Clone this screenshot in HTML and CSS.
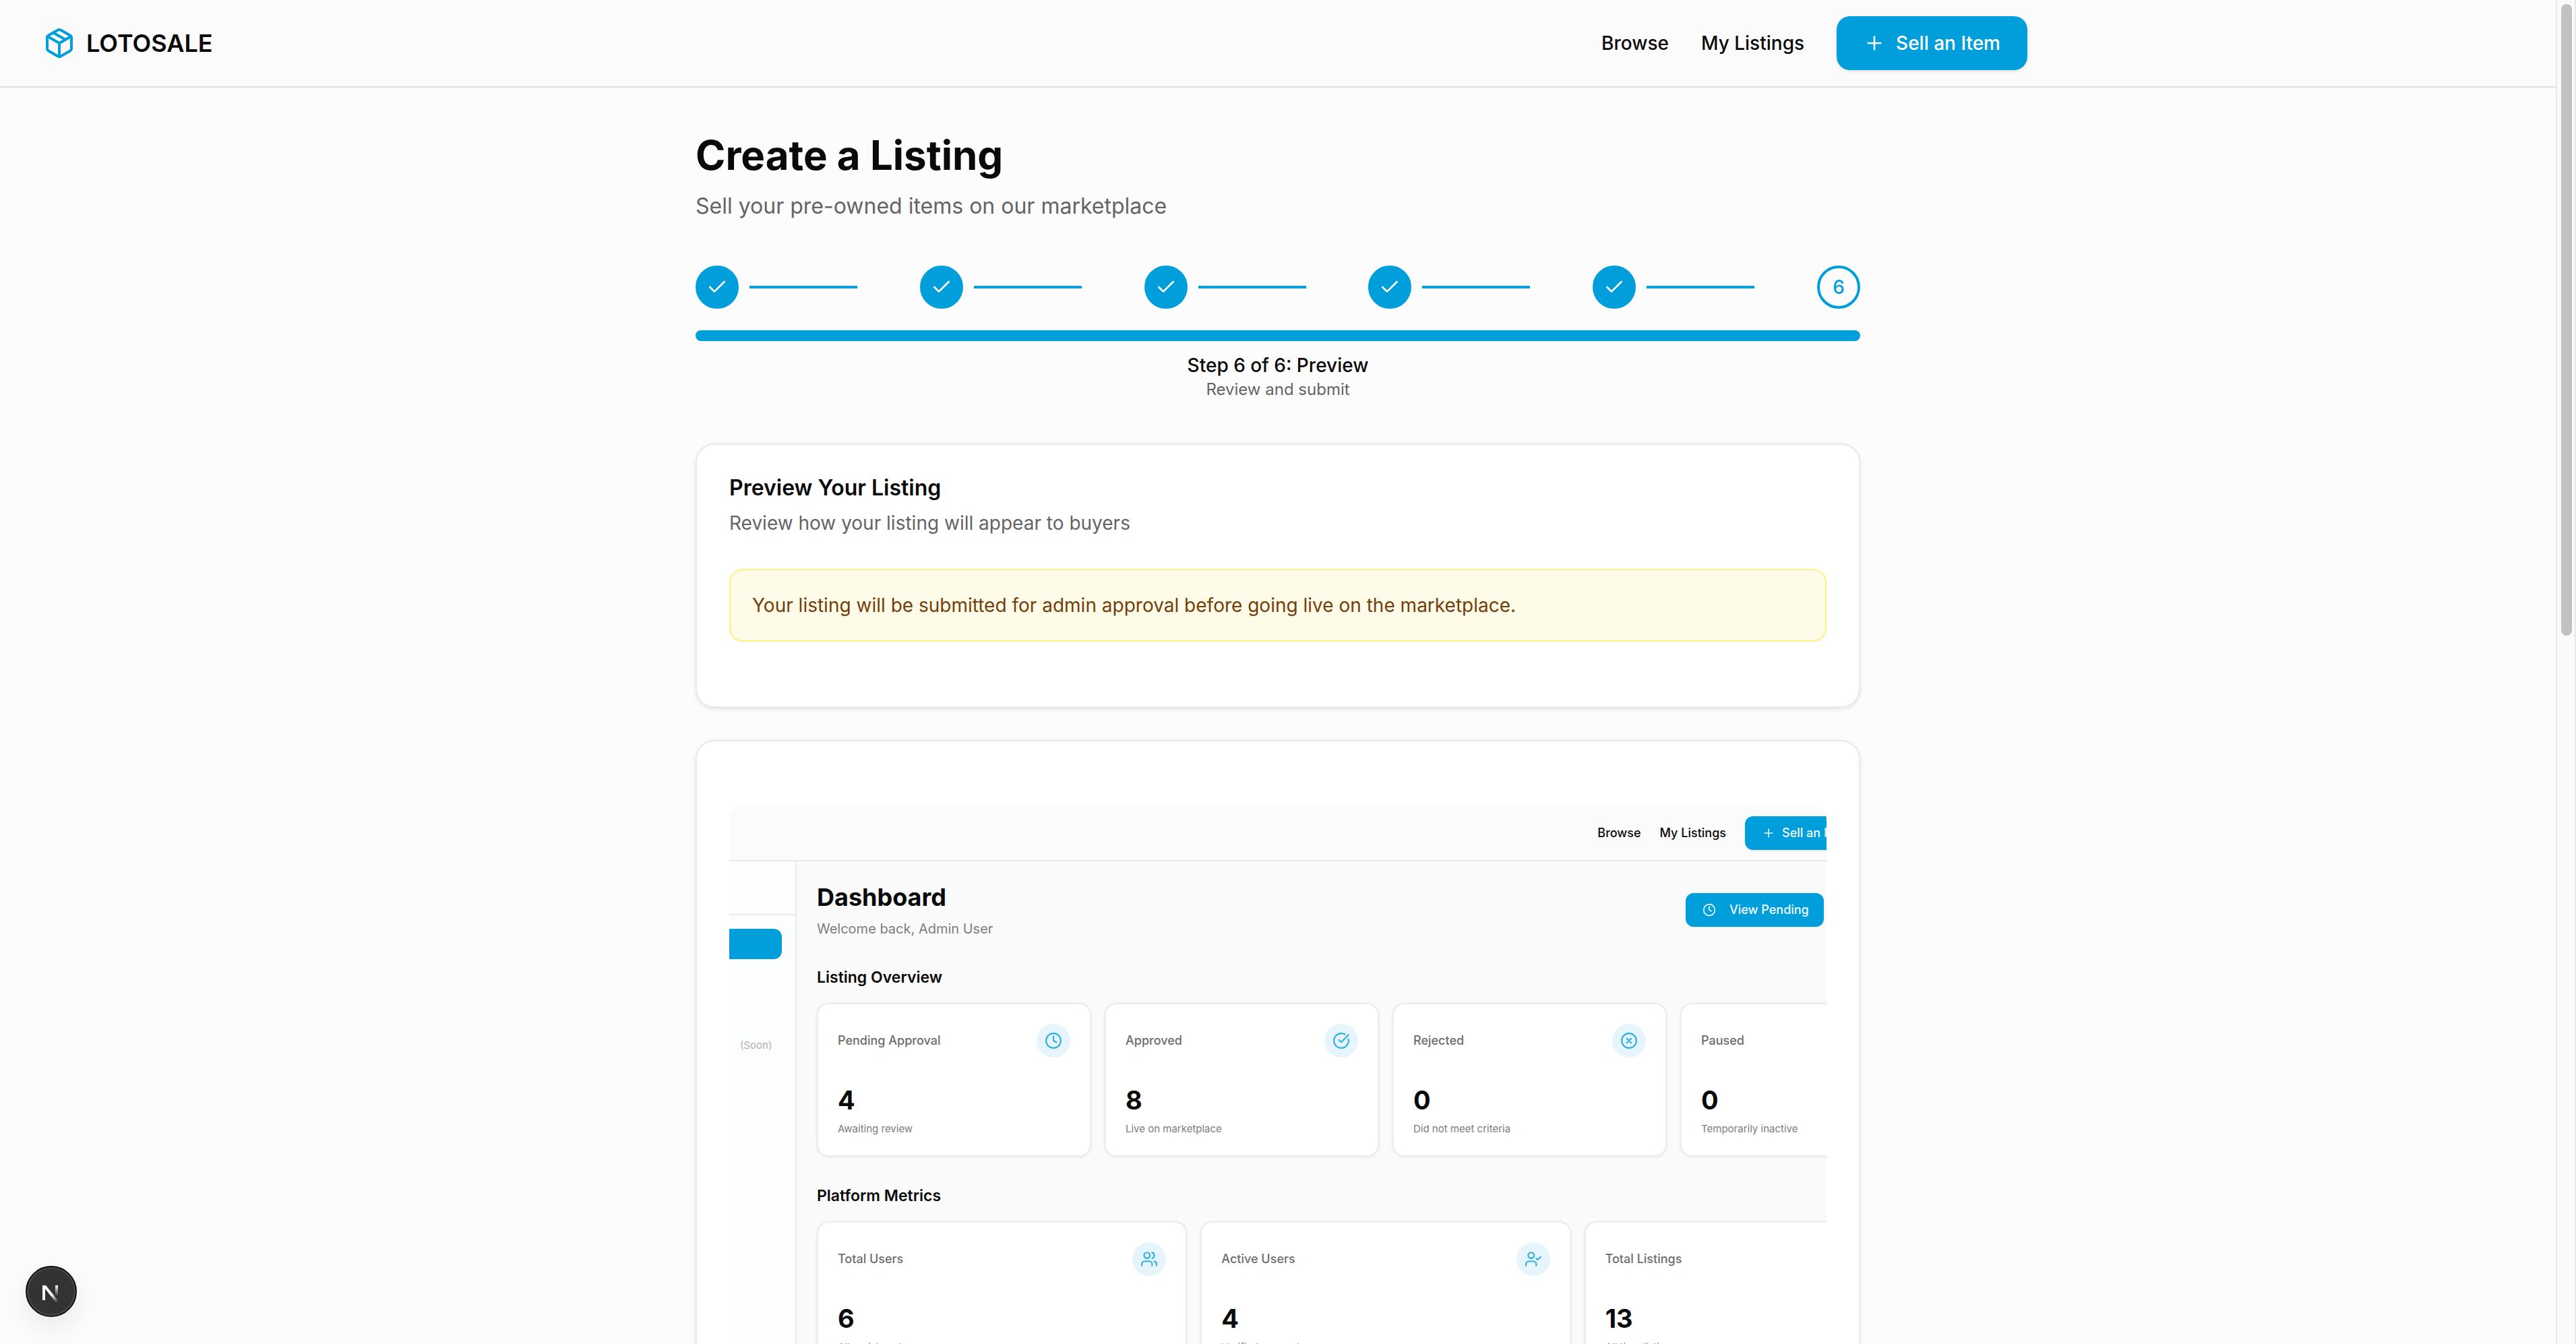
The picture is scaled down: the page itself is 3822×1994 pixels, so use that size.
FILE: index.html
```html
<!DOCTYPE html>
<html lang="en">
<head>
<meta charset="utf-8">
<title>Create a Listing - LOTOSALE</title>
<link rel="stylesheet" href="styles.css">
</head>
<body>
<svg class="sprite" aria-hidden="true">
  <symbol id="check" viewBox="0 0 24 24"><path d="M20 6 9 17l-5-5"/></symbol>
  <symbol id="plus" viewBox="0 0 24 24"><path d="M5 12h14M12 5v14"/></symbol>
  <symbol id="clock" viewBox="0 0 24 24"><circle cx="12" cy="12" r="10"/><path d="M12 6v6l4 2"/></symbol>
  <symbol id="circle-check" viewBox="0 0 24 24"><path d="M21.801 10A10 10 0 1 1 17 3.335"/><path d="m9 11 3 3L22 4"/></symbol>
  <symbol id="circle-x" viewBox="0 0 24 24"><circle cx="12" cy="12" r="10"/><path d="m15 9-6 6M9 9l6 6"/></symbol>
  <symbol id="users" viewBox="0 0 24 24"><path d="M16 21v-2a4 4 0 0 0-4-4H6a4 4 0 0 0-4 4v2"/><circle cx="9" cy="7" r="4"/><path d="M22 21v-2a4 4 0 0 0-3-3.870M16 3.130a4 4 0 0 1 0 7.750"/></symbol>
  <symbol id="user-check" viewBox="0 0 24 24"><path d="m16 11 2 2 4-4M16 21v-2a4 4 0 0 0-4-4H6a4 4 0 0 0-4 4v2"/><circle cx="9" cy="7" r="4"/></symbol>
</svg>
<div class="app">
  <div class="page">
    <header class="header">
      <div class="header-inner">
        <a class="brand" href="#"><svg class="icon" viewBox="0 0 24 24"><path d="M21 8a2 2 0 0 0-1-1.730l-7-4a2 2 0 0 0-2 0l-7 4A2 2 0 0 0 3 8v8a2 2 0 0 0 1 1.730l7 4a2 2 0 0 0 2 0l7-4A2 2 0 0 0 21 16Z"/><path d="M12 22V12"/><path d="m3.300 7 8.700 5 8.700-5"/><path d="m7.500 4.270 9 5.150"/></svg>LOTOSALE</a>
        <nav class="nav">
          <a href="#">Browse</a>
          <a href="#">My Listings</a>
          <button class="sell" type="button"><svg class="icon"><use href="#plus"/></svg>Sell an Item</button>
        </nav>
      </div>
    </header>
    <main class="main">
      <h1>Create a Listing</h1>
      <p class="lead">Sell your pre-owned items on our marketplace</p>
      <ol class="steps">
        <li><span class="dot"><svg class="icon"><use href="#check"/></svg></span><span class="link"></span></li>
        <li><span class="dot"><svg class="icon"><use href="#check"/></svg></span><span class="link"></span></li>
        <li><span class="dot"><svg class="icon"><use href="#check"/></svg></span><span class="link"></span></li>
        <li><span class="dot"><svg class="icon"><use href="#check"/></svg></span><span class="link"></span></li>
        <li><span class="dot"><svg class="icon"><use href="#check"/></svg></span><span class="link"></span></li>
        <li><span class="dot current">6</span></li>
      </ol>
      <div class="progress"></div>
      <div class="step-label">
        <p class="step-name">Step 6 of 6: Preview</p>
        <p class="step-hint">Review and submit</p>
      </div>
      <section class="card intro">
        <h2>Preview Your Listing</h2>
        <p class="desc">Review how your listing will appear to buyers</p>
        <div class="alert">Your listing will be submitted for admin approval before going live on the marketplace.</div>
      </section>
      <section class="card photo-card">
        <div class="photo">
          <div class="shot-header">
            <span>Browse</span>
            <span>My Listings</span>
            <span class="shot-btn shot-sell"><svg class="icon"><use href="#plus"/></svg>Sell an Item</span>
          </div>
          <div class="shot-body">
            <div class="shot-side">
              <div class="side-head"></div>
              <div class="side-active"></div>
              <span class="soon">(Soon)</span>
            </div>
            <div class="shot-main">
              <div class="shot-top">
                <div>
                  <h3>Dashboard</h3>
                  <p class="welcome">Welcome back, Admin User</p>
                </div>
                <span class="shot-btn pending"><svg class="icon"><use href="#clock"/></svg>View Pending</span>
              </div>
              <h4>Listing Overview</h4>
              <div class="stats four">
                <div class="stat"><div class="stat-top">Pending Approval<span class="badge"><svg class="icon"><use href="#clock"/></svg></span></div><strong>4</strong><small>Awaiting review</small></div>
                <div class="stat"><div class="stat-top">Approved<span class="badge"><svg class="icon"><use href="#circle-check"/></svg></span></div><strong>8</strong><small>Live on marketplace</small></div>
                <div class="stat"><div class="stat-top">Rejected<span class="badge"><svg class="icon"><use href="#circle-x"/></svg></span></div><strong>0</strong><small>Did not meet criteria</small></div>
                <div class="stat"><div class="stat-top">Paused<span class="badge"></span></div><strong>0</strong><small>Temporarily inactive</small></div>
              </div>
              <h4>Platform Metrics</h4>
              <div class="stats three">
                <div class="stat"><div class="stat-top">Total Users<span class="badge"><svg class="icon"><use href="#users"/></svg></span></div><strong>6</strong><small>All registered users</small></div>
                <div class="stat"><div class="stat-top">Active Users<span class="badge"><svg class="icon"><use href="#user-check"/></svg></span></div><strong>4</strong><small>Verified accounts</small></div>
                <div class="stat"><div class="stat-top">Total Listings<span class="badge"></span></div><strong>13</strong><small>All time listings</small></div>
              </div>
            </div>
          </div>
        </div>
      </section>
    </main>
  </div>
  <div class="scrollbar"><div class="thumb"></div></div>
  <button class="devtools" type="button" aria-label="Open Next.js Dev Tools">
    <svg viewBox="0 0 40 40">
      <defs>
        <linearGradient id="ga" x1="21" y1="24" x2="30" y2="36" gradientUnits="userSpaceOnUse"><stop stop-color="#fff"/><stop offset="1" stop-color="#fff" stop-opacity="0"/></linearGradient>
        <linearGradient id="gb" x1="28" y1="11" x2="28" y2="27" gradientUnits="userSpaceOnUse"><stop stop-color="#fff"/><stop offset="1" stop-color="#fff" stop-opacity="0"/></linearGradient>
      </defs>
      <path d="M7 33V11h5L32 36l-3 3L11 16v17z" fill="url(#ga)"/>
      <path d="M26 11h4v16h-4z" fill="url(#gb)"/>
    </svg>
  </button>
</div>
</body>
</html>
```
FILE: styles.css
```css
:root {
  --blue: #009fdb;
  --ink: #0a0a0a;
  --muted: #646464;
  --line: #e6eaeb;
}

* { box-sizing: border-box; }

body, h1, h2, h3, h4, p, ol { margin: 0; padding: 0; }

body {
  background: #fcfcfc;
  color: var(--ink);
  font-family: Inter, "Liberation Sans", sans-serif;
  font-size: 28px;
  line-height: 40px;
}

a { color: inherit; text-decoration: none; }
button { font: inherit; border: 0; }
.sprite { position: absolute; width: 0; height: 0; }

.icon {
  flex: none;
  fill: none;
  stroke: currentColor;
  stroke-width: 2;
  stroke-linecap: round;
  stroke-linejoin: round;
}

.app { display: flex; height: 100vh; overflow: hidden; }
.page { flex: 1; min-width: 0; }

/* Site header */
.header { background: #fbfbfb; border-bottom: 2px solid #d9dfe3; }
.header-inner {
  display: flex;
  align-items: center;
  justify-content: space-between;
  max-width: 3072px;
  height: 128px;
  padding: 0 64px;
}
.brand { display: flex; align-items: center; gap: 16px; font-size: 36px; font-weight: 600; }
.brand .icon { width: 48px; height: 48px; color: var(--blue); }
.nav { display: flex; align-items: center; gap: 48px; font-weight: 500; }
.sell {
  display: flex;
  align-items: center;
  gap: 16px;
  height: 80px;
  padding: 0 40px;
  border-radius: 20px;
  background: var(--blue);
  color: #fff;
  font-weight: 500;
  box-shadow: 0 2px 4px rgba(0, 0, 0, .1);
}
.sell .icon { width: 32px; height: 32px; }

/* Wizard */
.main { max-width: 1792px; margin: 0 auto; padding: 64px 32px; }
h1 { font-size: 60px; line-height: 72px; font-weight: 700; }
.lead { margin-top: 16px; font-size: 32px; line-height: 48px; color: var(--muted); }
.steps { display: flex; justify-content: space-between; margin-top: 64px; list-style: none; }
.steps li { display: flex; align-items: center; gap: 16px; }
.dot {
  display: grid;
  place-items: center;
  width: 64px;
  height: 64px;
  border: 4px solid var(--blue);
  border-radius: 50%;
  background: var(--blue);
  color: #fff;
  font-weight: 500;
}
.dot .icon { width: 32px; height: 32px; }
.dot.current { background: none; color: var(--blue); }
.link { width: 160px; height: 4px; margin-right: 16px; background: var(--blue); }
.progress { height: 16px; margin-top: 32px; border-radius: 8px; background: var(--blue); }
.step-label { margin: 16px 0 64px; text-align: center; }
.step-name { font-weight: 500; }
.step-hint { font-size: 24px; line-height: 32px; color: var(--muted); }

.card {
  border: 2px solid var(--line);
  border-radius: 28px;
  background: #fff;
  box-shadow: 0 2px 6px rgba(0, 0, 0, .1);
}
.intro { padding: 48px 48px 96px; }
h2 { font-size: 32px; line-height: 32px; font-weight: 600; }
.desc { margin-top: 16px; color: var(--muted); }
.alert {
  margin-top: 48px;
  padding: 32px;
  border: 2px solid #fff085;
  border-radius: 20px;
  background: #fefbe8;
  color: #733e0a;
}
.photo-card { margin-top: 48px; padding: 96px 48px; }

/* Listing photo: a dashboard cropped by its frame */
.photo {
  overflow: hidden;
  border-radius: 20px;
  background: #fafafa;
  font-size: 18px;
  line-height: 24px;
}
.shot-header {
  display: flex;
  align-items: center;
  justify-content: flex-end;
  gap: 28px;
  width: 1687px;
  height: 82px;
  border-bottom: 2px solid #e8eaea;
  background: #fbfbfb;
  font-weight: 500;
}
.shot-btn {
  display: flex;
  align-items: center;
  height: 50px;
  border-radius: 12px;
  background: var(--blue);
  color: #f2fafd;
  font-weight: 500;
  white-space: nowrap;
  box-shadow: 0 1px 3px rgba(0, 0, 0, .1);
}
.shot-btn .icon { width: 20px; height: 20px; }
.shot-sell { gap: 10px; width: 180px; padding-left: 25px; }
.shot-body { display: flex; }
.shot-side {
  flex: none;
  width: 100px;
  border-right: 2px solid #e8eaea;
  background: #fcfdfd;
}
.side-head { height: 80px; border-bottom: 2px solid #e8eaea; }
.side-active { height: 45px; margin: 20px 20px 0 0; border-radius: 0 12px 12px 0; background: var(--blue); }
.soon { display: block; margin: 116px 0 0 16px; font-size: 15px; color: #b0b0b0; }
.shot-main { flex: none; width: 1748px; padding: 30px; }
.shot-top { display: flex; align-items: center; justify-content: space-between; width: 1494px; }
h3 { font-size: 36px; line-height: 46px; font-weight: 700; }
.welcome { margin-top: 10px; font-size: 20px; color: #7c7c7c; line-height: 28px; }
.pending { gap: 20px; width: 205px; padding-left: 25px; }
h4 { margin: 40px 0 20px; font-size: 23px; line-height: 36px; font-weight: 600; }
.stats { display: grid; gap: 20px; }
.four { grid-template-columns: repeat(4, 1fr); }
.three { grid-template-columns: repeat(3, 1fr); }
.stat {
  display: flex;
  flex-direction: column;
  height: 228px;
  padding: 29px;
  border: 2px solid #eceeee;
  border-radius: 18px;
  background: #fff;
  box-shadow: 0 1px 4px rgba(0, 0, 0, .08);
}
.stat-top { display: flex; align-items: center; justify-content: space-between; color: #6c6c6c; font-weight: 500; }
.badge { display: grid; place-items: center; width: 50px; height: 50px; border-radius: 50%; background: #e5f5fb; color: #30b0e1; }
.badge .icon { width: 26px; height: 26px; }
.stat strong { margin-top: 40px; font-size: 38px; line-height: 46px; font-weight: 700; }
.stat small { margin-top: 10px; font-size: 15px; line-height: 20px; color: #7c7c7c; }

/* Scroll track */
.scrollbar { flex: none; width: 30px; padding: 6px; border: solid #e8e8e8; border-width: 0 2px; background: #fafafa; }
.thumb { width: 16px; height: 47vh; border-radius: 8px; background: #c1c1c1; }

/* Framework badge floating over the page */
.devtools {
  position: fixed;
  left: 38px;
  bottom: 40px;
  display: grid;
  place-items: center;
  width: 76px;
  height: 76px;
  padding: 0;
  border: 2px solid #111;
  border-radius: 50%;
  background: #333;
  box-shadow: inset 0 0 0 2px #4c4c4c, 0 16px 40px rgba(0, 0, 0, .08);
}
.devtools svg { width: 40px; height: 40px; }
```
